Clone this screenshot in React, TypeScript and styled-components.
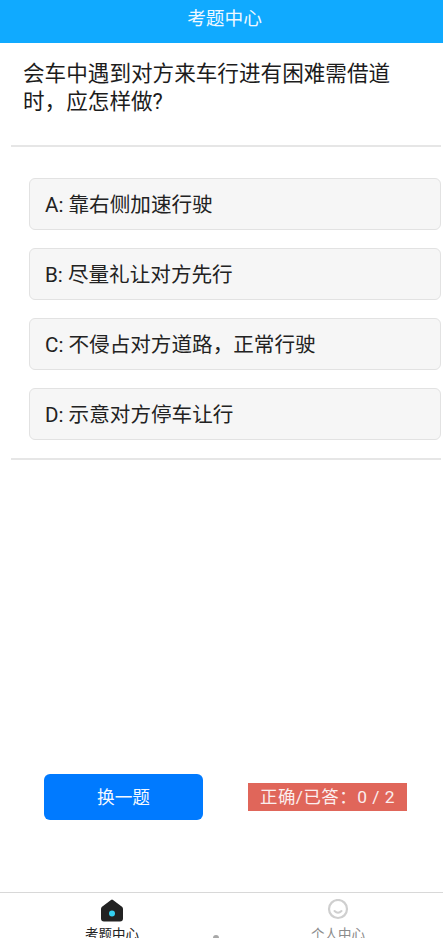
import React from "react";
import styled, { createGlobalStyle } from "styled-components";

const Global = createGlobalStyle`
  html, body { margin: 0; padding: 0; background: #fff; overflow: hidden; }
  body { font-family: Roboto, "Noto Sans CJK SC", sans-serif; }
  * { box-sizing: border-box; }
`;

const Page = styled.div`
  position: relative;
  width: 443px;
  height: 938px;
  display: flex;
  flex-direction: column;
  overflow: hidden;
  background: #fff;
`;

const Header = styled.header`
  height: 43px;
  flex: none;
  background: #10aaff;
  font-size: 18.7px;
  line-height: 38px;
  padding-left: 6px;
  text-align: center;
  color: #eef8ff;
`;

const Main = styled.main`
  flex: 1;
  min-height: 0;
  display: flex;
  flex-direction: column;
`;

const Question = styled.div`
  padding: 17px 40px 0 23px;
  height: 102px;
  font-size: 21.6px;
  line-height: 28px;
  color: #1c1c1c;
`;

const Divider = styled.div`
  height: 2px;
  margin: 0 2px 0 11px;
  background: #e6e6e6;
  flex: none;
`;

const Options = styled.div`
  display: flex;
  flex-direction: column;
  gap: 18px;
  padding: 31px 2px 18px 28.5px;
`;

const Option = styled.div`
  height: 52px;
  padding: 0 15.5px 3px;
  display: flex;
  align-items: center;
  background: #f6f6f6;
  border: 1px solid #e2e2e2;
  border-radius: 6px;
  font-size: 20.6px;
  color: #222;
`;

const Actions = styled.div`
  margin-top: auto;
  margin-bottom: 72px;
  padding: 0 36px 0 44px;
  display: flex;
  align-items: center;
  justify-content: space-between;
`;

const NextButton = styled.button`
  width: 159px;
  height: 46px;
  border: 0;
  border-radius: 6px;
  padding: 0 0 2px;
  background: #007aff;
  color: #f4f8ff;
  font: inherit;
  font-size: 17.7px;
`;

const Score = styled.div`
  width: 159px;
  height: 28px;
  background: #e0665a;
  color: #fbeeee;
  font-size: 17.4px;
  line-height: 28px;
  letter-spacing: 0.5px;
  text-align: center;
  white-space: nowrap;
`;

const TabBar = styled.nav`
  height: 46px;
  flex: none;
  border-top: 1px solid #d8d8d8;
  padding: 6px 0 0 85px;
  display: flex;
  gap: 172px;
  overflow: hidden;
`;

const Tab = styled.div<{ $active?: boolean }>`
  width: 54px;
  display: flex;
  flex-direction: column;
  align-items: center;
  font-size: 13.5px;
  line-height: 18px;
  white-space: nowrap;
  color: ${(p) => (p.$active ? "#222" : "#8c8c8c")};
  svg { display: block; flex: none; margin-bottom: 3px; }
`;

const HomeDot = styled.div`
  position: absolute;
  left: 213px;
  top: 935px;
  width: 6px;
  height: 6px;
  border-radius: 50%;
  background: #a8a8a8;
`;

const options = [
  "A: 靠右侧加速行驶",
  "B: 尽量礼让对方先行",
  "C: 不侵占对方道路，正常行驶",
  "D: 示意对方停车让行",
];

export default function App() {
  return (
    <Page>
      <Global />
      <Header>考题中心</Header>
      <Main>
        <Question>会车中遇到对方来车行进有困难需借道时，应怎样做?</Question>
        <Divider />
        <Options>
          {options.map((o) => (
            <Option key={o}>{o}</Option>
          ))}
        </Options>
        <Divider />
        <Actions>
          <NextButton>换一题</NextButton>
          <Score>正确/已答：0 / 2</Score>
        </Actions>
      </Main>
      <TabBar>
        <Tab $active>
          <svg width="24" height="23" viewBox="0 0 24 23">
            <path d="M11 1 Q12 0.2 13 1 L22 7.8 Q23 8.6 23 10 V19.5 Q23 22.5 20 22.5 H4 Q1 22.5 1 19.5 V10 Q1 8.6 2 7.8 Z" fill="#222" />
            <circle cx="12" cy="14.5" r="3" fill="#35d0f0" />
          </svg>
          考题中心
        </Tab>
        <Tab>
          <svg width="24" height="23" viewBox="0 0 24 23">
            <circle cx="12" cy="10" r="9" fill="none" stroke="#cfcfcf" strokeWidth="2.2" />
            <path d="M8.5 12 Q12 15.5 15.5 12" fill="none" stroke="#cfcfcf" strokeWidth="2" strokeLinecap="round" />
          </svg>
          个人中心
        </Tab>
      </TabBar>
      <HomeDot />
    </Page>
  );
}
